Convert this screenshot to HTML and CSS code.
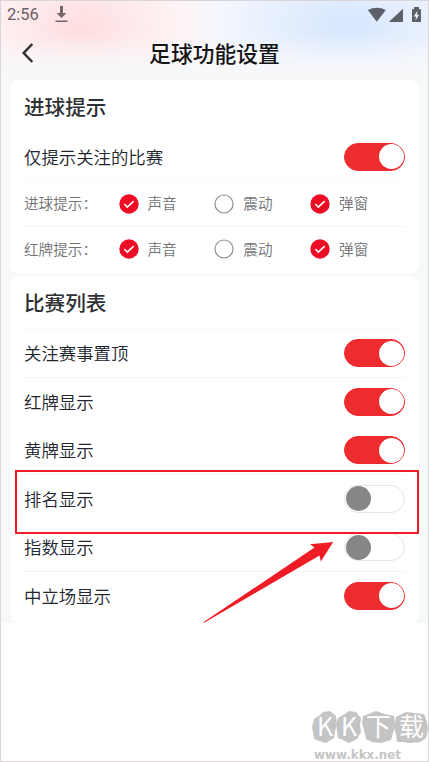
FILE: index.html
```html
<!DOCTYPE html>
<html lang="zh-CN">
<head>
<meta charset="utf-8">
<title>足球功能设置</title>
<link rel="stylesheet" href="styles.css">
</head>
<body>
<div class="screen">
  <main class="app">
    <div class="status">
      <span class="time">2:56</span>
      <svg class="download" width="14" height="17" viewBox="0 0 14 17"><path d="M5 0h3v7h3.500L6.500 12 1.500 7H5zM.5 14.500h12v1.500H.5z" fill="#756568"/></svg>
      <svg class="signals" width="56" height="17" viewBox="0 0 56 17" fill="#5d6068">
        <path d="M.8 3Q9.800-1.400 18.800 3L9.800 14.800z"/>
        <path d="M36 1.800V15H21.800z"/>
        <path d="M45 2.200h2V0h5v2.200h2V15h-9z"/>
        <path d="M50.400 3.800L46.800 9.500h2.200l-.5 4 3.600-5.700h-2.200z" fill="#f4f8ff"/>
      </svg>
    </div>
    <header class="navbar">
      <svg class="back" width="14" height="22" viewBox="0 0 14 22"><path d="M11.300 2L2.700 11l8.600 9" fill="none" stroke="#303030" stroke-width="2.500"/></svg>
      <h1>足球功能设置</h1>
    </header>

    <section class="card card-tips">
      <h2>进球提示</h2>
      <div class="row line"><span>仅提示关注的比赛</span><i class="toggle on"></i></div>
      <div class="options line strong">
        <span>进球提示：</span>
        <label><svg class="radio" viewBox="0 0 20 20"><circle cx="10" cy="10" r="9.700" fill="#ee0b24"/><path d="M5.300 10l3 3.100 6.400-6" fill="none" stroke="#fff" stroke-width="1.500"/></svg><span>声音</span></label>
        <label><svg class="radio" viewBox="0 0 20 20"><circle cx="10" cy="10" r="9" fill="#fff" stroke="#8e8e8e" stroke-width="1.200"/></svg><span>震动</span></label>
        <label><svg class="radio" viewBox="0 0 20 20"><circle cx="10" cy="10" r="9.700" fill="#ee0b24"/><path d="M5.300 10l3 3.100 6.400-6" fill="none" stroke="#fff" stroke-width="1.500"/></svg><span>弹窗</span></label>
      </div>
      <div class="options">
        <span>红牌提示：</span>
        <label><svg class="radio" viewBox="0 0 20 20"><circle cx="10" cy="10" r="9.700" fill="#ee0b24"/><path d="M5.300 10l3 3.100 6.400-6" fill="none" stroke="#fff" stroke-width="1.500"/></svg><span>声音</span></label>
        <label><svg class="radio" viewBox="0 0 20 20"><circle cx="10" cy="10" r="9" fill="#fff" stroke="#8e8e8e" stroke-width="1.200"/></svg><span>震动</span></label>
        <label><svg class="radio" viewBox="0 0 20 20"><circle cx="10" cy="10" r="9.700" fill="#ee0b24"/><path d="M5.300 10l3 3.100 6.400-6" fill="none" stroke="#fff" stroke-width="1.500"/></svg><span>弹窗</span></label>
      </div>
    </section>

    <section class="card card-list">
      <h2 class="line">比赛列表</h2>
      <div class="row line strong"><span>关注赛事置顶</span><i class="toggle on"></i></div>
      <div class="row"><span>红牌显示</span><i class="toggle on"></i></div>
      <div class="row line strong"><span>黄牌显示</span><i class="toggle on"></i></div>
      <div class="row"><span>排名显示</span><i class="toggle"></i></div>
      <div class="row line strong"><span>指数显示</span><i class="toggle"></i></div>
      <div class="row"><span>中立场显示</span><i class="toggle on"></i></div>
    </section>
  </main>

  <div class="highlight"></div>
  <svg class="arrow" width="132" height="84" viewBox="0 0 132 84"><path d="M.3 82.200L111.500 7.600 107 4.300 130.200 2 117.800 21.500 116.500 15.600 1.200 82.800z" fill="#ee1c25"/></svg>
  <svg class="watermark" width="117" height="54" viewBox="0 0 117 54">
    <g fill="#c4c4c4">
      <path d="M2 10l6-4 3-3 7-1 6 5 1 8-2 7-1 7-8 5-7-2-5-2-1-7-1-5z"/>
      <path d="M26 9l7-4 4-3 7 1 5 6-1 8 1 6-4 7-8 4-6-3-5-2-1-7-1-6z"/>
      <path d="M51 7l13-5 9 3 9 2 1 8-2 9-2 7-10 3-9-1-6-3-2-9-2-7z"/>
      <path d="M84 8l10-5 9 1 9 1 3 8 1 8-2 8-6 4-10 1-7-1-6 0-1-8-2-6z"/>
    </g>
    <text x="5" y="27" class="wm-latin">K</text>
    <text x="29" y="27" class="wm-latin">K</text>
    <text x="54" y="27" class="wm-cjk">下</text>
    <text x="87" y="27" class="wm-cjk">载</text>
    <text x="2" y="50" class="wm-url" textLength="87" lengthAdjust="spacingAndGlyphs">www.kkx.net</text>
  </svg>
</div>
</body>
</html>
```
FILE: styles.css
```css
* { box-sizing: border-box; }
body { margin: 0; background: #fff; font-family: "Noto Sans CJK SC", sans-serif; }
.screen {
  position: relative;
  width: 429px;
  height: 762px;
  border: 1px solid #d9d5d8;
  overflow: hidden;
}
.app {
  height: 622px;
  padding: 0 9px;
  background:
    linear-gradient(to bottom, rgba(247,248,250,0) 34px, #f7f8fa 70px),
    radial-gradient(ellipse 140px 90px at 80px 26px, #ffdfe1 5%, rgba(255,223,225,0) 100%),
    radial-gradient(ellipse 170px 95px at 345px 24px, #dae8fe 10%, rgba(218,232,254,0) 100%),
    #fdfcfd;
}
.status { display: flex; align-items: center; height: 28px; }
.time { margin-left: -3px; width: 48px; font: 16.5px/28px Roboto, sans-serif; color: #6c5e61; }
.download { margin-top: -1px; }
.signals { margin-left: auto; margin-right: -4px; }
.navbar { position: relative; display: flex; align-items: center; justify-content: center; height: 51px; }
.back { position: absolute; left: 11px; top: 13px; }
h1 { margin: 0; padding-bottom: 4px; font-size: 21.8px; line-height: 47px; font-weight: 500; color: #151515; }
.card { background: #fff; border-radius: 9px; padding: 0 14px; }
.card-tips { height: 193.5px; }
.card-list { height: 347px; margin-top: 2.5px; padding-bottom: 3px; }
h2 { margin: 0; height: 53px; font-size: 20.6px; line-height: 52px; font-weight: 500; color: #2f3033; }
.line { border-bottom: 1px solid #fafafa; }
.line.strong { border-bottom-color: #f3f3f4; }
.row { display: flex; align-items: center; justify-content: space-between; height: 48.5px; font-size: 17.4px; font-weight: 350; color: #20252e; }
.card-list .row.line { padding-top: 1px; }
.card-list .row.line span { padding-bottom: 1px; }
.toggle {
  display: flex;
  align-items: center;
  width: 61px;
  height: 28px;
  padding: 0 1px;
  border: 1px solid #e5e5e6;
  border-radius: 14px;
  background: #fff;
}
.toggle::before { content: ""; width: 25px; height: 25px; border-radius: 50%; background: #868688; }
.toggle.on { justify-content: flex-end; padding: 0; background: #ee2b2f; border-color: #ee2b2f; }
.toggle.on::before { background: #fff; }
.options { display: grid; grid-template-columns: 94.5px 95.8px 95.8px 1fr; align-items: center; height: 45.3px; font-size: 14.6px; font-weight: 350; color: #727375; white-space: nowrap; }
.options span { padding-bottom: 2px; }
.options label { display: flex; align-items: center; gap: 9px; }
.radio { width: 20px; height: 20px; }
.highlight { position: absolute; left: 14px; top: 469px; width: 404px; height: 64px; border: 2px solid #ee1c25; }
.arrow { position: absolute; left: 202px; top: 539px; }
.watermark { position: absolute; left: 311px; top: 708px; overflow: visible; }
.wm-latin { font: 400 25px "Noto Sans CJK SC", sans-serif; fill: #fff; }
.wm-cjk { font: 400 25px "Noto Sans CJK SC", sans-serif; fill: #fff; }
.wm-url { font: bold 11.5px "DejaVu Sans", sans-serif; fill: #c5c5c5; }
```
